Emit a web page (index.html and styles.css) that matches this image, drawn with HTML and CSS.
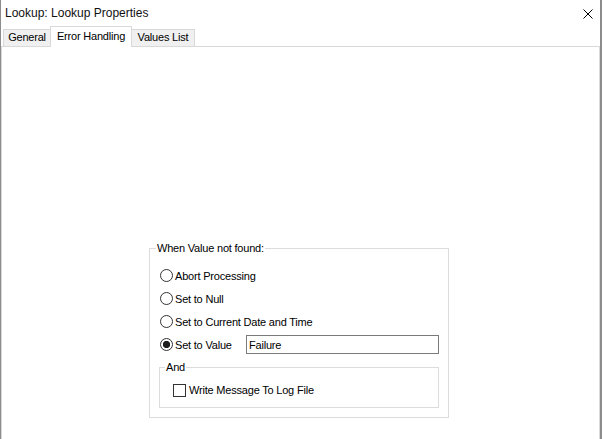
FILE: index.html
```html
<!DOCTYPE html>
<html lang="en">
<head>
  <meta charset="UTF-8">
  <title>Lookup: Lookup Properties</title>
  <link rel="stylesheet" href="styles.css">
</head>
<body>
  <div class="window">
    <div class="titlebar">
      <span class="title">Lookup: Lookup Properties</span>
      <svg class="close" width="10" height="10" viewBox="0 0 10 10">
        <path d="M0.5 0.5 L9.5 9.5 M9.5 0.5 L0.5 9.5" stroke="#000" stroke-width="1" fill="none"/>
      </svg>
    </div>

    <div class="tabs">
      <div class="tab tab-general">General</div>
      <div class="tab tab-errors active">Error Handling</div>
      <div class="tab tab-values">Values List</div>
    </div>

    <div class="panel">
      <fieldset class="group">
        <legend>When Value not found:</legend>
        <label class="option"><input type="radio" name="notfound">Abort Processing</label>
        <label class="option"><input type="radio" name="notfound">Set to Null</label>
        <label class="option"><input type="radio" name="notfound">Set to Current Date and Time</label>
        <div class="option">
          <label class="value-label"><input type="radio" name="notfound" checked>Set to Value</label>
          <input type="text" class="value-box" value="Failure">
        </div>

        <fieldset class="group inner">
          <legend>And</legend>
          <label class="check"><input type="checkbox">Write Message To Log File</label>
        </fieldset>
      </fieldset>
    </div>
  </div>
</body>
</html>
```

FILE: styles.css
```css
html, body {
  margin: 0;
  background: #fff;
}
body {
  width: 603px;
  height: 439px;
  overflow: hidden;
  font-family: "Liberation Sans", Arial, sans-serif;
  font-size: 11px;
  letter-spacing: -0.2px;
  color: #000;
}
.window {
  box-sizing: border-box;
  width: 602px;
  height: 439px;
  border-left: 1px solid #8c8c8c;
  border-right: 2px solid #8c8c8c;
  display: flex;
  flex-direction: column;
}

/* title bar */
.titlebar {
  height: 26px;
  display: flex;
  align-items: center;
  justify-content: space-between;
  padding: 0 7px 0 4px;
}
.title {
  font-size: 12px;
  letter-spacing: 0;
  color: #111;
}
.close {
  display: block;
  margin-top: 1px;
}

/* tab strip */
.tabs {
  display: flex;
  align-items: flex-end;
  height: 20px;
  padding-left: 2px;
}
.tab {
  box-sizing: border-box;
  height: 17px;
  line-height: 15px;
  text-align: center;
  background: #f0f0f0;
  border: 1px solid #d9d9d9;
  border-bottom: none;
}
.tab-general {
  width: 48px;
}
.tab-errors {
  width: 82px;
  margin-left: -1px;
}
.tab-values {
  width: 64px;
  margin-left: -1px;
}
.tab.active {
  height: 21px;
  line-height: 19px;
  margin-bottom: -1px;
  background: #fff;
  position: relative;
  z-index: 1;
}

/* tab page */
.panel {
  flex: 1;
  box-sizing: border-box;
  width: 599px;
  border: 1px solid #d9d9d9;
  border-bottom: none;
  padding: 194px 0 0 147px;
}

/* group boxes */
.group {
  box-sizing: border-box;
  width: 300px;
  margin: 0;
  padding: 9px 9px 9px 10px;
  border: 1px solid #dcdcdc;
}
.group legend {
  line-height: 14px;
  padding: 0 1px;
  margin-left: -4px;
}
.option {
  display: flex;
  align-items: center;
  height: 23px;
}
.value-label {
  display: flex;
  align-items: center;
  width: 86px;
  flex-shrink: 0;
}
.value-box {
  box-sizing: border-box;
  width: 193px;
  height: 19px;
  margin: 0;
  padding: 0 2px;
  border: 1px solid #7a7a7a;
  font-family: inherit;
  font-size: 11px;
  letter-spacing: -0.2px;
  color: #000;
  outline: none;
}

input[type="radio"] {
  appearance: none;
  -webkit-appearance: none;
  width: 13px;
  height: 13px;
  margin: 0 2px 0 0;
  border: 1px solid #333;
  border-radius: 50%;
  background: #fff;
  flex-shrink: 0;
}
input[type="radio"]:checked {
  background: radial-gradient(circle, #1e1e1e 0 3.4px, #fff 3.9px);
}

.inner {
  width: 280px;
  margin: 4px 0 0 -1px;
  padding: 5px 9px 6px 13px;
}
.inner legend {
  margin-left: -8px;
}
.check {
  display: flex;
  align-items: center;
  height: 22px;
}
input[type="checkbox"] {
  appearance: none;
  -webkit-appearance: none;
  width: 13px;
  height: 13px;
  margin: 0 3px 0 0;
  border: 1px solid #333;
  background: #fff;
  flex-shrink: 0;
}
```
